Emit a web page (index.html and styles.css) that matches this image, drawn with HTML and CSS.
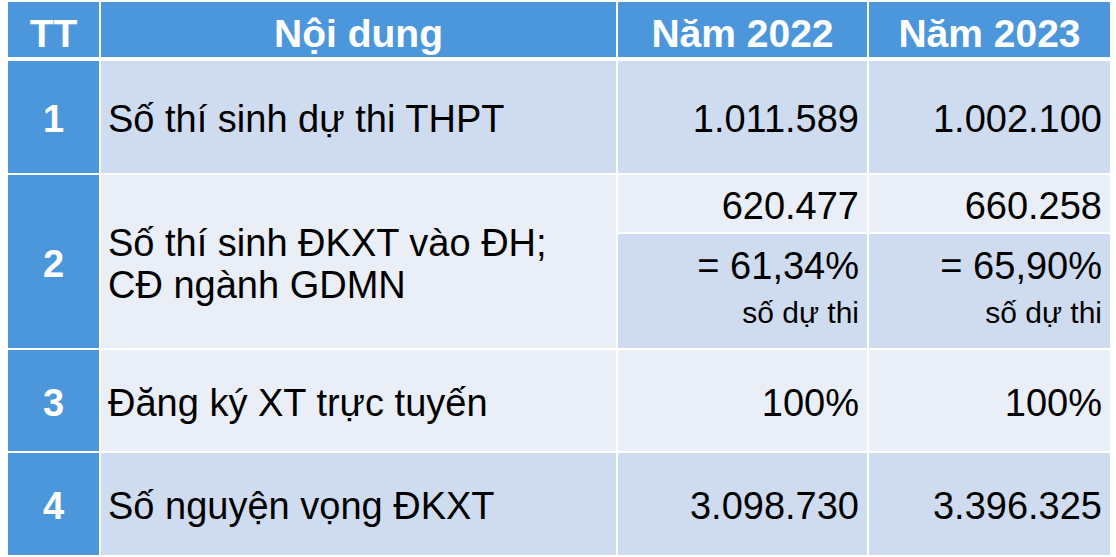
FILE: index.html
```html
<!DOCTYPE html>
<html lang="vi">
<head>
<meta charset="utf-8">
<title>Bảng số liệu</title>
<link rel="stylesheet" href="styles.css">
</head>
<body>
<div class="table">
  <div class="cell head">TT</div>
  <div class="cell head">Nội dung</div>
  <div class="cell head">Năm 2022</div>
  <div class="cell head">Năm 2023</div>

  <div class="cell tt">1</div>
  <div class="cell text dark">Số thí sinh dự thi THPT</div>
  <div class="cell num dark">1.011.589</div>
  <div class="cell num dark">1.002.100</div>

  <div class="cell tt span2">2</div>
  <div class="cell text light span2">Số thí sinh ĐKXT vào ĐH;<br>CĐ ngành GDMN</div>
  <div class="cell num light">620.477</div>
  <div class="cell num light">660.258</div>
  <div class="cell num dark pct"><span class="big">= 61,34%</span><span class="small">số dự thi</span></div>
  <div class="cell num dark pct"><span class="big">= 65,90%</span><span class="small">số dự thi</span></div>

  <div class="cell tt">3</div>
  <div class="cell text light">Đăng ký XT trực tuyến</div>
  <div class="cell num light">100%</div>
  <div class="cell num light">100%</div>

  <div class="cell tt">4</div>
  <div class="cell text dark">Số nguyện vọng ĐKXT</div>
  <div class="cell num dark">3.098.730</div>
  <div class="cell num dark">3.396.325</div>
</div>
</body>
</html>
```

FILE: styles.css
```css
html, body {
  margin: 0;
  padding: 0;
  background: #ffffff;
}

.table {
  display: grid;
  grid-template-columns: 91px 515px 249px 241px;
  grid-template-rows: 57px 112px 57px 114px 101px 102px;
  gap: 2px;
  margin: 2px 0 0 8px;
  width: 1102px;
  font-family: "Liberation Sans", Arial, sans-serif;
  font-size: 38px;
  color: #000;
}

.cell {
  display: flex;
  align-items: center;
  line-height: 42px;
  padding-top: 4px;
  box-sizing: border-box;
}

.head {
  background: #4c97db;
  color: #fff;
  font-weight: bold;
  font-size: 39px;
  justify-content: center;
  margin-bottom: 2px;
  padding-top: 8px;
}

.tt {
  background: #4c97db;
  color: #fff;
  font-weight: bold;
  justify-content: center;
}

.span2 {
  grid-row: span 2;
}

.dark {
  background: #cfdcef;
}

.light {
  background: #e9eef7;
}

.text {
  padding-left: 7px;
}

.num {
  justify-content: flex-end;
  padding-right: 8px;
}

.pct {
  flex-direction: column;
  align-items: flex-end;
  justify-content: flex-start;
  padding-top: 10px;
}

.pct .big {
  line-height: 44px;
}

.pct .small {
  font-size: 30px;
  line-height: 34px;
  margin-top: 8px;
}
```
